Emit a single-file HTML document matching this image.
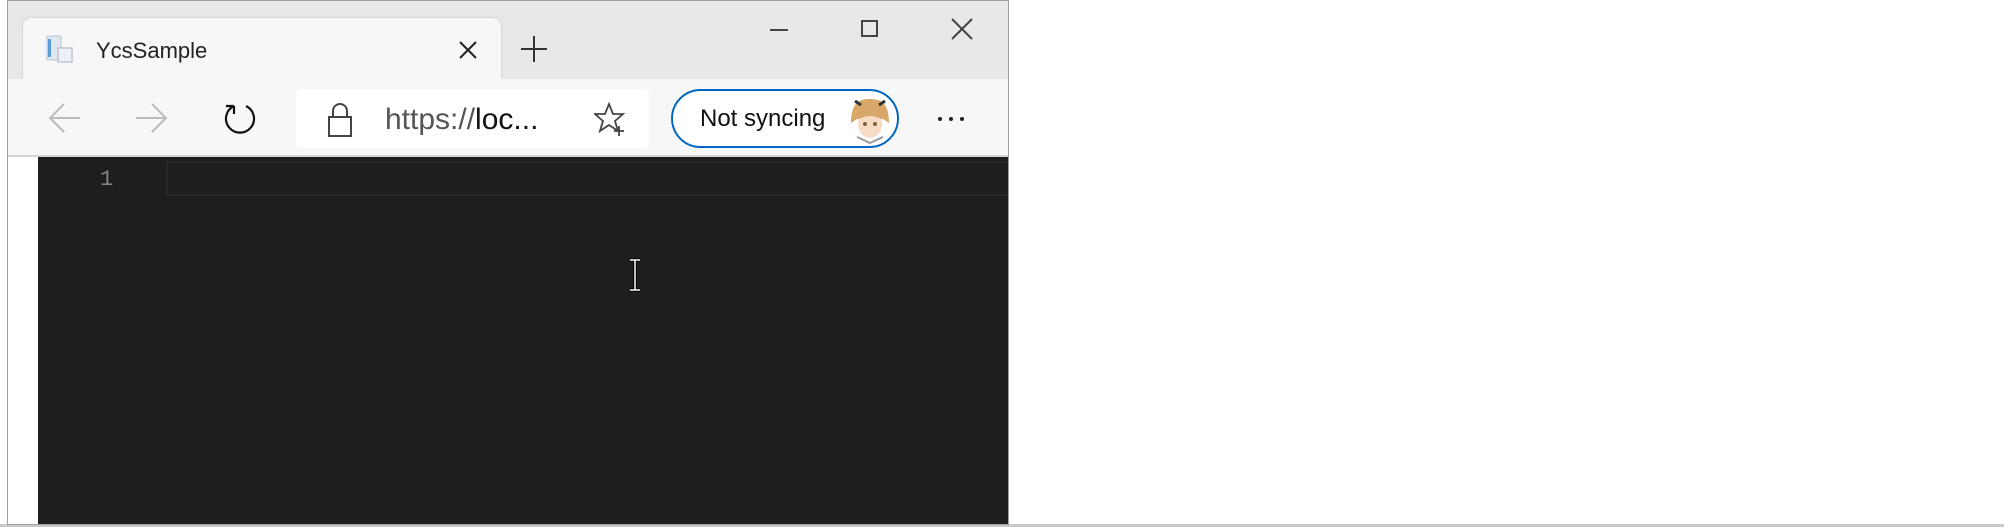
<!DOCTYPE html>
<html><head><style>
body{margin:0;width:2004px;height:527px;background:#fff;position:relative;overflow:hidden;font-family:"Segoe UI","Liberation Sans",sans-serif}
.a{position:absolute}
</style></head><body>
<div class="a" style="left:0;top:524px;width:2004px;height:3px;background:#c8c8c8"></div>
<div class="a" style="left:7px;top:0;width:1002px;height:525px;background:#e8e8e8;border:1px solid #a0a0a0;box-sizing:border-box"></div>
<!-- tab -->
<div class="a" style="left:23px;top:18px;width:478px;height:62px;background:#f7f7f7;border-radius:8px 8px 0 0;box-shadow:0 0 2px rgba(0,0,0,.2)"></div>
<svg class="a" style="left:44px;top:33px" width="32" height="32"><rect x="3" y="3" width="14" height="24" fill="#dfe6ee" stroke="#b7c6d6"/><rect x="4" y="6" width="3" height="18" fill="#5a9bd5"/><rect x="14" y="15" width="14" height="14" fill="#eef2f6" stroke="#aab"/></svg>
<div class="a" style="left:96px;top:38px;font-size:22px;color:#222">YcsSample</div>
<svg class="a" style="left:458px;top:40px" width="20" height="20" stroke="#222" stroke-width="2"><path d="M2 2L18 18M18 2L2 18"/></svg>
<svg class="a" style="left:520px;top:35px" width="28" height="28" stroke="#333" stroke-width="2"><path d="M14 1V27M1 14H27"/></svg>
<!-- window controls -->
<div class="a" style="left:770px;top:29px;width:18px;height:2px;background:#444"></div>
<div class="a" style="left:861px;top:20px;width:17px;height:17px;border:2px solid #444;box-sizing:border-box"></div>
<svg class="a" style="left:951px;top:18px" width="22" height="22" stroke="#444" stroke-width="2"><path d="M1 1L21 21M21 1L1 21"/></svg>
<!-- toolbar -->
<div class="a" style="left:8px;top:79px;width:1000px;height:78px;background:#f7f7f7;border-bottom:2px solid #d4d4d4;box-sizing:border-box"></div>
<svg class="a" style="left:48px;top:102px" width="34" height="32" stroke="#bbb" stroke-width="2" fill="none"><path d="M32 16H2M16 2L2 16L16 30"/></svg>
<svg class="a" style="left:134px;top:102px" width="34" height="32" stroke="#bbb" stroke-width="2" fill="none"><path d="M2 16H32M18 2L32 16L18 30"/></svg>
<svg class="a" style="left:222px;top:100px" width="36" height="38" stroke="#111" stroke-width="2.2" fill="none"><path d="M12 6A14 14 0 1 0 24 6M12 6V14M12 6H4"/></svg>
<div class="a" style="left:296px;top:89px;width:353px;height:59px;background:#fff;border-radius:5px"></div>
<svg class="a" style="left:326px;top:102px" width="28" height="36" stroke="#444" stroke-width="2" fill="none"><path d="M7 15V9A7 7 0 0 1 21 9V15M3 15H25V34H3Z"/></svg>
<div class="a" style="left:385px;top:103px;font-size:30px;color:#555">https://<span style="color:#111">loc...</span></div>
<svg class="a" style="left:594px;top:102px" width="34" height="34" stroke="#444" stroke-width="1.8" fill="none"><path d="M15 2L19 12L29 12L21 19L24 29L15 23L6 29L9 19L1 12L11 12Z"/><path d="M25 24V34M20 29H30"/></svg>
<div class="a" style="left:671px;top:89px;width:228px;height:59px;border:2px solid #0067c0;border-radius:30px;box-sizing:border-box;background:#fff"></div>
<div class="a" style="left:700px;top:105px;font-size:24px;color:#111">Not syncing</div>
<svg class="a" style="left:845px;top:93px" width="50" height="52"><circle cx="25" cy="26" r="24" fill="#fff"/><path d="M6 30C6 10 14 6 25 6S44 10 44 30L38 26L12 26Z" fill="#d8a86a"/><ellipse cx="25" cy="31" rx="12" ry="14" fill="#f6dcc4"/><path d="M14 20Q25 12 36 20L36 26Q25 20 14 26Z" fill="#d8a86a"/><circle cx="20" cy="31" r="2" fill="#764"/><circle cx="30" cy="31" r="2" fill="#764"/><path d="M12 44L25 50L38 44" stroke="#999" fill="none" stroke-width="2"/><path d="M10 8L16 12M40 8L34 12" stroke="#333" stroke-width="3"/></svg>
<div class="a" style="left:938px;top:117px;width:4px;height:4px;border-radius:2px;background:#222;box-shadow:11px 0 #222,22px 0 #222"></div>
<!-- editor -->
<div class="a" style="left:8px;top:157px;width:30px;height:367px;background:#fff"></div>
<div class="a" style="left:38px;top:157px;width:970px;height:367px;background:#1e1e1e"></div>
<div class="a" style="left:166px;top:161px;width:842px;height:35px;border:2px solid #282828;border-right:none;box-sizing:border-box"></div>
<div class="a" style="left:100px;top:167px;font-family:'Liberation Mono',monospace;font-size:22px;color:#858585">1</div>
<svg class="a" style="left:628px;top:258px" width="14" height="34" stroke="#fff" stroke-width="1.5" fill="none"><path d="M2 2H12M2 32H12M7 2V32" stroke="#000" stroke-width="3.5"/><path d="M2 2H12M2 32H12M7 2V32"/></svg>
</body></html>
